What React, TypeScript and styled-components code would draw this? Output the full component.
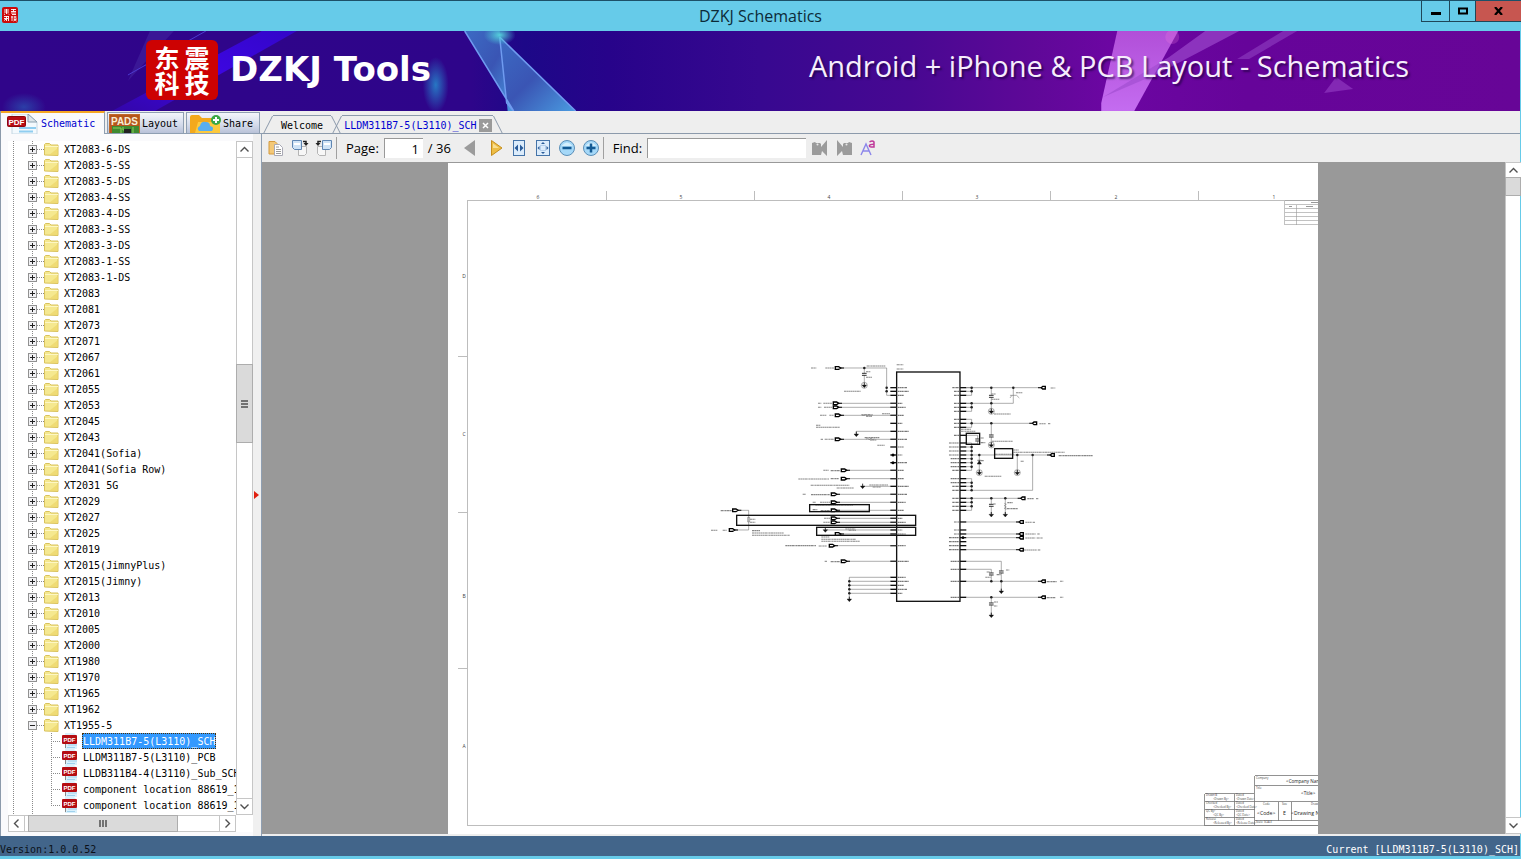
import React from 'react';
import styled, { createGlobalStyle } from 'styled-components';

const MONO = '"DejaVu Sans Mono", "Liberation Mono", monospace';
const UI = '"Open Sans", "Noto Sans", sans-serif';
const CJK = '"Noto Sans CJK SC", sans-serif';

const GlobalStyle = createGlobalStyle`
  *, *::before, *::after { box-sizing: border-box; }
  body { margin: 0; overflow: hidden; font-family: ${UI}; color: #000; }
  button, input { font: inherit; color: inherit; }
  svg { display: block; flex: none; }
`;

const Window = styled.div`
  display: flex;
  flex-direction: column;
  height: 100vh;
  border-right: 1px solid #66cbe9;
  border-bottom: 3px solid #66cbe9;
  background: #eeeeee;
`;

const TitleBar = styled.header`
  position: relative;
  display: flex;
  align-items: center;
  justify-content: center;
  flex: none;
  height: 31px;
  margin-right: -1px;
  border-top: 1px solid #1c5068;
  background: #66cbe9;
`;

const TitleText = styled.h1`
  margin: 0;
  font-size: 16px;
  font-weight: 400;
  line-height: 24px;
  color: #0c2a38;
`;

const AppBadge = styled.div`
  position: absolute;
  left: 2px;
  top: 6px;
`;

const WindowButtons = styled.div`
  position: absolute;
  right: 0;
  top: 0;
  display: flex;
`;

const WindowButton = styled.button<{ $wide?: number; $close?: boolean }>`
  display: flex;
  align-items: center;
  justify-content: center;
  width: ${(p) => p.$wide ?? 27}px;
  height: 21px;
  padding: 0;
  border: solid #1f4658;
  border-width: 0 0 1px 1px;
  background: ${(p) => (p.$close ? '#c75650' : 'transparent')};
`;

const Banner = styled.section`
  position: relative;
  display: flex;
  align-items: center;
  flex: none;
  height: 80px;
  overflow: hidden;
  background: #30058a;
`;

const BannerArt = styled.svg`
  position: absolute;
  inset: 0;
  width: 100%;
  height: 100%;
`;

const Seal = styled.div`
  position: relative;
  display: grid;
  grid-template-columns: 30px 30px;
  grid-auto-rows: 25px;
  justify-content: center;
  align-content: center;
  width: 72px;
  height: 60px;
  margin: 0 12px 2px 146px;
  border-radius: 6px;
  background: #cd0202;
  color: #fff;
  font-family: ${CJK};
  font-size: 25px;
  font-weight: 700;
  line-height: 24px;
  text-align: center;
`;

const Brand = styled.div`
  position: relative;
  padding-bottom: 4px;
  font-family: "DejaVu Sans", ${UI};
  font-size: 34px;
  font-weight: 700;
  line-height: 46px;
  color: #fff;
`;

const Slogan = styled.div`
  position: relative;
  margin-left: auto;
  margin-right: 111px;
  padding-bottom: 10px;
  font-size: 29px;
  font-weight: 400;
  line-height: 40px;
  color: #f6eefc;
  text-shadow: 2px 2px 2px rgba(20, 0, 50, 0.6);
  white-space: nowrap;
`;

const Body = styled.main`
  display: flex;
  flex: 1;
  min-height: 0;
`;

const Sidebar = styled.aside`
  display: flex;
  flex-direction: column;
  flex: none;
  width: 262px;
  border-left: 1px solid #8c9aab;
  background: #eeeeee;
`;

const SideTabs = styled.nav`
  display: flex;
  align-items: flex-end;
  gap: 2px;
  flex: none;
  height: 23px;
  border-bottom: 1px solid #8f9fb2;
`;

const SideTab = styled.button<{ $active?: boolean; $width: number }>`
  display: flex;
  align-items: center;
  gap: 2px;
  width: ${(p) => p.$width}px;
  height: ${(p) => (p.$active ? 23 : 21)}px;
  margin-bottom: ${(p) => (p.$active ? -1 : 0)}px;
  padding: 0 0 0 ${(p) => (p.$active ? 6 : 1)}px;
  border: 1px solid #8f9fb2;
  border-bottom: 0;
  border-left-width: ${(p) => (p.$active ? 0 : 1)}px;
  border-top: ${(p) => (p.$active ? '2px solid #f5a623' : '1px solid #8f9fb2')};
  background: ${(p) => (p.$active ? '#fafafc' : 'linear-gradient(#f4f6fb, #d3daea 60%, #b9c2d8)')};
  color: ${(p) => (p.$active ? '#0000d0' : '#000')};
  font-family: ${MONO};
  font-size: 10px;
  overflow: hidden;
`;

const SideMain = styled.div`
  display: flex;
  flex: 1;
  min-height: 0;
  background: #fafafc;
`;

const TreeFrame = styled.div`
  display: grid;
  grid-template-columns: 1fr 17px;
  grid-template-rows: 1fr 17px;
  flex: 1;
  min-width: 0;
  margin: 7px 0 4px 7px;
  background: #fff;
`;

const TreeView = styled.div`
  position: relative;
  min-width: 0;
  min-height: 0;
  overflow: hidden;
`;

const TreeList = styled.ul`
  margin: 0;
  padding: 0;
  list-style: none;
  background:
    repeating-linear-gradient(#8a8a8a 0 1px, transparent 1px 2px) 5px 0 / 1px 100% no-repeat,
    repeating-linear-gradient(#8a8a8a 0 1px, transparent 1px 2px) 24px 0 / 1px 100% no-repeat;
`;

const FileList = styled.ul`
  margin: 0 0 0 43px;
  padding: 0;
  list-style: none;
  background: repeating-linear-gradient(#8a8a8a 0 1px, transparent 1px 2px) 0 0 / 1px 72px no-repeat;
`;

const TreeRow = styled.li<{ $file?: boolean }>`
  display: flex;
  align-items: center;
  height: 16px;
  padding-left: ${(p) => (p.$file ? 0 : 20)}px;
  font-family: ${MONO};
  font-size: 10px;
  line-height: 14px;
  white-space: nowrap;
`;

const Expander = styled.button`
  position: relative;
  flex: none;
  width: 9px;
  height: 9px;
  padding: 0;
  border: 1px solid #919191;
  background: #f1f1f4;
`;

const ExpanderMark = styled.svg`
  width: 7px;
  height: 7px;
`;

const Lead = styled.span<{ $width: number }>`
  flex: none;
  width: ${(p) => p.$width}px;
  height: 1px;
  background: repeating-linear-gradient(90deg, #8a8a8a 0 1px, transparent 1px 2px);
`;

const NodeName = styled.span<{ $selected?: boolean }>`
  margin-left: 4px;
  padding: 2px 1px 0;
  ${(p) => p.$selected && 'background: #3399ff; color: #fff; outline: 1px dotted #503000; outline-offset: -1px;'}
`;

const ScrollBar = styled.div<{ $row?: boolean }>`
  display: flex;
  flex-direction: ${(p) => (p.$row ? 'row' : 'column')};
  min-width: 0;
  min-height: 0;
  border: 1px solid #c6c6c6;
  background: #fff;
`;

const ScrollArrow = styled.button`
  display: flex;
  align-items: center;
  justify-content: center;
  flex: none;
  width: 15px;
  height: 15px;
  padding: 0;
  border: 0;
  background: #fff;
  outline: 1px solid #c6c6c6;
`;

const Spacer = styled.div<{ $grow: number }>`
  flex: ${(p) => p.$grow} 1 0;
`;

const Thumb = styled.div<{ $grow: number }>`
  display: flex;
  align-items: center;
  justify-content: center;
  flex: ${(p) => p.$grow} 1 0;
  background: #dadada;
  outline: 1px solid #adadad;
`;

const Splitter = styled.div`
  display: flex;
  align-items: center;
  flex: none;
  width: 9px;
  padding: 20px 0 0 1px;
  border-right: 1px solid #8f9fb2;
  background: #f0f0f0;
`;

const Content = styled.section`
  display: flex;
  flex-direction: column;
  flex: 1;
  min-width: 0;
`;

const DocTabs = styled.nav`
  display: flex;
  flex: none;
  height: 23px;
  padding-left: 11px;
  border-bottom: 1px solid #8c9aab;
`;

const DocTab = styled.div<{ $active?: boolean }>`
  position: relative;
  display: flex;
  align-items: center;
  height: 19px;
  margin: 4px 0 0;
  padding: ${(p) => (p.$active ? '0 1px 0 2px' : '0 8px')};
  border-top: 1px solid #8c9aab;
  font-family: ${MONO};
  font-size: 10px;
  color: ${(p) => (p.$active ? '#0000d0' : '#000')};
  &::before, &::after {
    content: '';
    position: absolute;
    top: 0;
    width: 1px;
    height: 18px;
    background: #8c9aab;
  }
  &::before { left: -1px; transform-origin: top; transform: skewX(-27deg); }
  &::after { right: -1px; transform-origin: top; transform: skewX(27deg); }
  & + & { margin-left: 11px; }
`;

const TabLink = styled.button`
  padding: 0;
  border: 0;
  background: none;
`;

const TabClose = styled.button`
  display: flex;
  align-items: center;
  justify-content: center;
  width: 13px;
  height: 13px;
  margin-left: 2px;
  padding: 0;
  border: 0;
  background: #9a9a9a;
`;

const Toolbar = styled.div`
  display: flex;
  align-items: center;
  flex: none;
  height: 28px;
  padding-left: 2px;
  font-size: 13px;
  line-height: 20px;
  background: #eeeeee;
`;

const ToolButton = styled.button`
  display: flex;
  align-items: center;
  justify-content: center;
  flex: none;
  width: 24px;
  height: 24px;
  padding: 0;
  border: 0;
  background: none;
`;

const Divider = styled.span`
  flex: none;
  width: 1px;
  height: 22px;
  background: #a0a0a0;
`;

const FieldLabel = styled.label`
  margin: 0 5px 0 9px;
`;

const Field = styled.input<{ $width: number }>`
  width: ${(p) => p.$width}px;
  height: 20px;
  padding: 0 4px;
  border: solid #999;
  border-width: 1px 0 0 1px;
  border-radius: 0;
  background: #fff;
  text-align: ${(p) => (p.$width < 100 ? 'right' : 'left')};
`;

const PageTotal = styled.span`
  margin: 0 8px 0 5px;
`;

const FindActions = styled.div`
  display: flex;
  margin-left: 2px;
`;

const Viewer = styled.div`
  display: flex;
  flex: 1;
  min-height: 0;
  margin-bottom: 2px;
  background: #999999;
`;

const PageArea = styled.div`
  display: flex;
  justify-content: center;
  flex: 1;
  min-width: 0;
  min-height: 0;
  padding: 1px 1px 0 0;
  overflow: hidden;
`;

const Sheet = styled.svg`
  flex: none;
  width: 870px;
  height: 100%;
  background: #fff;
`;

const ViewerScroll = styled.div`
  display: flex;
  flex: none;
  width: 15px;
  & > div { flex: 1; border-right: 0; }
`;

const StatusBar = styled.footer`
  display: flex;
  justify-content: space-between;
  align-items: flex-end;
  flex: none;
  height: 20px;
  padding-right: 1px;
  background: #42658a;
  font-family: ${MONO};
  font-size: 10px;
  line-height: 12px;
  color: #0b1118;
`;

const Current = styled.span`
  color: #fff;
`;

/* ---------- small drawings ---------- */

const Chevron = ({ d }: { d: string }) => (
  <svg width="9" height="9" viewBox="0 0 9 9" fill="none" stroke="#505050" strokeWidth="1.4"><path d={d} /></svg>
);
const UP = 'M0.5 6.5 L4.5 2.5 L8.5 6.5';
const DOWN = 'M0.5 2.5 L4.5 6.5 L8.5 2.5';
const LEFT = 'M6.5 0.5 L2.5 4.5 L6.5 8.5';
const RIGHT = 'M2.5 0.5 L6.5 4.5 L2.5 8.5';

const Folder = () => (
  <svg width="15" height="13" viewBox="0 0 15 13">
    <path d="M0.5 12V1.5l1-1h4l1.5 1.5h7v10.5z" fill="#f5e88f" stroke="#d9c25c" />
    <path d="M1 3.5h13" stroke="#fdf7c4" />
    <path d="M5 12L14 5v7z" fill="#ecd569" opacity=".7" />
  </svg>
);

const PdfSmall = () => (
  <svg width="17" height="16" viewBox="0 0 17 16">
    <path d="M4 0h9l3 3v13H4z" fill="#d9f0fb" />
    <path d="M7 12h9M6 14.500h8" stroke="#9fd2ee" />
    <path d="M4.500 11v4" stroke="#888" />
    <rect x="1" y="2" width="15" height="9" rx="1" fill="#b50d12" />
    <text x="8.500" y="9" textAnchor="middle" fontFamily="Liberation Sans, sans-serif" fontSize="6" fontWeight="700" fill="#fff">PDF</text>
  </svg>
);

const PdfLarge = () => (
  <svg width="32" height="20" viewBox="0 0 32 20">
    <path d="M5 0h16l9 8v12H5z" fill="#f3f9fd" stroke="#c4d6e2" />
    <path d="M21 0v8h9z" fill="#dde5ea" stroke="#8ba0af" />
    <path d="M12 14h17M12 17.500h14" stroke="#8fcdf0" strokeWidth="2" />
    <rect x="0.500" y="2.500" width="18" height="10" rx="1" fill="#b80c14" stroke="#8d070b" />
    <text x="9.500" y="10.500" textAnchor="middle" fontFamily="Liberation Sans, sans-serif" fontSize="8" fontWeight="700" fill="#fff">PDF</text>
  </svg>
);

const PadsIcon = () => (
  <svg width="31" height="19" viewBox="0 0 31 19">
    <rect width="31" height="19" fill="#c06a2a" />
    <rect x="1" y="1" width="29" height="18" fill="#b5561c" />
    <rect x="3" y="12" width="27" height="7" fill="#3f8a30" />
    <path d="M4 14h8v5M24 13v6M14 13v3h8" stroke="#8ccf5a" fill="none" />
    <rect x="15" y="15" width="7" height="4" fill="#222" />
    <text x="15.500" y="11" textAnchor="middle" fontFamily="Liberation Sans, sans-serif" fontSize="10" fontWeight="700" fill="#f7edd4">PADS</text>
  </svg>
);

const ShareIcon = () => (
  <svg width="33" height="19" viewBox="-2 0 33 19">
    <path d="M0 19V3q0-2 2-2h7l3 3h12q2 0 2 2v13z" fill="#f3a91c" />
    <path d="M5 19L8 8h22v11z" fill="#fdc93c" />
    <path d="M9 17q-3-3 1-5 1-5 6-4 4 0 4 4 5 1 2 5z" fill="#58aef0" />
    <circle cx="26" cy="6" r="5" fill="#3ba745" />
    <path d="M26 3v6M23 6h6" stroke="#fff" strokeWidth="2" />
  </svg>
);

const BannerShapes = () => (
  <BannerArt viewBox="0 0 1521 80" preserveAspectRatio="none" aria-hidden="true">
    <defs>
      <linearGradient id="base">
        <stop offset="0" stopColor="#30058a" />
        <stop offset="0.310" stopColor="#2e058a" />
        <stop offset="0.345" stopColor="#1d0888" />
        <stop offset="0.400" stopColor="#27038a" />
        <stop offset="0.500" stopColor="#370890" />
        <stop offset="0.600" stopColor="#480892" />
        <stop offset="0.680" stopColor="#5f0898" />
        <stop offset="0.730" stopColor="#6c06a2" />
        <stop offset="0.820" stopColor="#66049a" />
        <stop offset="1" stopColor="#670597" />
      </linearGradient>
      <linearGradient id="shard" x1="0" y1="0" x2="1" y2="1">
        <stop offset="0" stopColor="#3c6bc4" />
        <stop offset="0.500" stopColor="#3a55b4" />
        <stop offset="1" stopColor="#4a9be0" />
      </linearGradient>
      <linearGradient id="pink" x1="0" y1="0" x2="0" y2="1">
        <stop offset="0" stopColor="#b14fd8" />
        <stop offset="1" stopColor="#c46cf0" />
      </linearGradient>
      <linearGradient id="streak" x1="1" y1="0" x2="0" y2="1">
        <stop offset="0" stopColor="#3306c8" />
        <stop offset="0.500" stopColor="#3d06e2" />
        <stop offset="1" stopColor="#3306a8" />
      </linearGradient>
      <radialGradient id="glow">
        <stop offset="0" stopColor="#2777c4" />
        <stop offset="1" stopColor="#2777c4" stopOpacity="0" />
      </radialGradient>
      <radialGradient id="teal">
        <stop offset="0" stopColor="#55d0dc" />
        <stop offset="1" stopColor="#49c4d8" stopOpacity="0" />
      </radialGradient>
    </defs>
    <rect width="1521" height="80" fill="url(#base)" />
    <path d="M262 0h35L155 80h-43z" fill="url(#streak)" />
    <path d="M150 0h24L128 50z" fill="#4a33a8" opacity=".4" />
    <path d="M206 0L128 44" stroke="#4d3bd0" />
    <ellipse cx="436" cy="54" rx="13" ry="28" fill="url(#glow)" />
    <ellipse cx="24" cy="76" rx="22" ry="14" fill="url(#glow)" opacity=".5" />
    <path d="M465 0H500L508 80H514z" fill="url(#shard)" />
    <path d="M500 6L576 80H514L507 72z" fill="url(#shard)" />
    <path d="M465 0L514 80M500 6L576 80M500 6L507 72L514 80" stroke="#6f9bf0" strokeWidth="1.500" fill="none" />
    <ellipse cx="500" cy="4" rx="16" ry="10" fill="url(#teal)" />
    <path d="M1118 0h61L1135 80h-33v-8z" fill="url(#pink)" />
    <path d="M1206 0h34L1160 42l-56 24 66-40z" fill="#a04dd0" opacity=".65" />
    <path d="M1284 0h14L1250 28h-12z" fill="#8a38bc" opacity=".7" />
    <path d="M1325 62l12-16 17 12z" fill="#8328b4" />
    <circle cx="1173" cy="6" r="7" fill="#f07adf" opacity=".25" />
  </BannerArt>
);

/* ---------- toolbar icons ---------- */

const Icon = ({ children }: { children: React.ReactNode }) => (
  <svg width="18" height="18" viewBox="0 0 18 18" fill="none">{children}</svg>
);

const CopyIcon = () => (
  <Icon>
    <path d="M2 2.500h6l2 2V15H2z" fill="#f3c877" stroke="#d49a3f" />
    <path d="M7.500 5.500h5l3 3v8h-8z" fill="#fff" stroke="#a9a9b5" />
    <path d="M9 8h3M9 10.500h5M9 12.500h5M9 14.500h5" stroke="#9a9a9a" />
  </Icon>
);

const RotateIcon = ({ flip }: { flip?: boolean }) => (
  <Icon>
    <g transform={flip ? 'translate(18 0) scale(-1 1)' : undefined}>
      <path d="M7.500 7.500h8v7l-2 2h-6z" fill="#f7f7f7" stroke="#b5b5b5" />
      <path d="M1.500 1.500h9v9h-7l-2-2z" fill="#cfe3f6" stroke="#5f86b3" />
      <path d="M3 5h6" stroke="#fff" strokeWidth="2" />
      <path d="M12 2.500h3V5" stroke="#222" strokeWidth="1.500" />
      <path d="M12.500 4h5L15 7z" fill="#222" />
    </g>
  </Icon>
);

const PrevIcon = () => <Icon><path d="M13 1v16L2 9z" fill="#9b9b9b" /></Icon>;
const NextIcon = () => (
  <Icon>
    <path d="M5.500 1.500v15L16 9z" fill="#edbd45" stroke="#c58e1e" />
    <path d="M7 4.500V9h6z" fill="#f9df92" />
  </Icon>
);
const FitWidthIcon = () => (
  <Icon>
    <rect x="3.500" y="1.500" width="11" height="15" fill="#dcecfb" stroke="#4473a8" />
    <path d="M8 5.500v7L4.500 9zM10 5.500v7L13.500 9z" fill="#2a5c9a" />
  </Icon>
);
const FitPageIcon = () => (
  <Icon>
    <rect x="2.500" y="1.500" width="13" height="15" fill="#dcecfb" stroke="#4473a8" />
    <path d="M9 3l2 2h-4zM9 15l2-2h-4zM3.500 9l2-2v4zM14.500 9l-2-2v4z" fill="#2a5c9a" />
    <path d="M6.500 6.500h5v5h-5z" stroke="#8fb2da" strokeDasharray="1 1" />
  </Icon>
);
const ZoomIcon = ({ plus }: { plus?: boolean }) => (
  <Icon>
    <circle cx="9" cy="9" r="7.500" fill="#a5d8f8" stroke="#5b8fb8" />
    <path d="M3.500 7Q9 0 14.500 7z" fill="#d4effd" />
    <path d={plus ? 'M4.500 9h9M9 4.500v9' : 'M4.500 9h9'} stroke="#135a94" strokeWidth="2.500" />
  </Icon>
);
const BinocularIcon = ({ flip }: { flip?: boolean }) => (
  <Icon>
    <g transform={flip ? 'translate(18 0) scale(-1 1)' : undefined}>
      <path d="M1 4l3-1 1 1h4l1 1v3l6-7v16l-5-5-1 4H1z" fill="#9b9b9b" />
      <circle cx="6.500" cy="5.500" r="1" fill="#e8e8e8" />
    </g>
  </Icon>
);
const MatchCaseIcon = () => (
  <Icon>
    <path d="M2 16L7 5l5 11M4 12h6" stroke="#8c86ea" strokeWidth="1.400" />
    <path d="M10.500 3q3-2 4.500 0v5q-5 .5-4.500-1.500Q11 5 15 5.200" stroke="#c03a9a" strokeWidth="1.500" />
  </Icon>
);

/* ---------- schematic sheet ---------- */

// Geometry below is kept on a grid of thirds of a screen pixel.
const leftPins = [113, 124, 136, 160, 172, 196, 220, 244, 268, 291, 315, 338, 361, 386, 409, 433, 457, 481, 505, 517, 540, 552, 587, 634, 682, 694, 706, 718, 730];
const rightPins = [113, 124, 136, 160, 172, 184, 208, 220, 232, 256, 279, 291, 303, 315, 326, 338, 350, 361, 386, 398, 409, 421, 445, 457, 469, 481, 516, 540, 552, 563, 575, 587, 599, 634, 658, 694, 742];

// [port x, y, wire end x]
const leftPorts = [
  [400, 160, 590], [400, 172, 590], [406, 196, 590], [406, 268, 590], [424, 361, 590], [424, 386, 590],
  [394, 433, 590], [394, 457, 590], [394, 481, 590], [394, 505, 590], [394, 517, 590], [406, 552, 590],
  [388, 587, 590], [424, 634, 590], [406, 54, 560], [98, 481, 146], [88, 540, 146],
];
const rightPorts = [
  [1036, 113], [1010, 220], [1063, 315], [975, 445], [970, 516], [970, 552], [970, 563], [970, 599], [1036, 694], [1036, 742],
];
// [x, y, length] of annotation runs too small to read
const notes = [
  [333, 54, 16], [376, 54, 26], [500, 48, 56], [498, 65, 14], [498, 82, 18], [432, 124, 50], [590, 44, 20], [590, 57, 20],
  [354, 160, 10], [370, 160, 28], [354, 172, 10], [372, 172, 24], [360, 196, 20], [388, 196, 14], [484, 194, 34], [498, 199, 18], [546, 191, 24],
  [348, 226, 14], [348, 232, 72], [362, 268, 8], [374, 268, 28], [494, 263, 44], [510, 270, 20], [532, 286, 22],
  [370, 361, 16], [392, 362, 28], [295, 387, 92], [392, 386, 24], [332, 406, 116], [410, 414, 52], [508, 405, 56], [518, 411, 24],
  [308, 433, 10], [333, 434, 56], [338, 457, 10], [360, 457, 30], [346, 465, 114], [338, 479, 14], [362, 482, 30], [372, 505, 20], [370, 517, 22],
  [62, 482, 34], [33, 541, 20], [68, 541, 12], [156, 542, 24], [156, 549, 96], [156, 556, 114], [364, 561, 24], [364, 568, 104], [364, 574, 116],
  [256, 587, 92], [356, 588, 24], [374, 634, 8], [392, 635, 28], [150, 508, 16], [150, 517, 16], [436, 537, 30], [446, 541, 22],
  [874, 132, 14], [874, 148, 24], [948, 128, 20], [882, 192, 50], [1052, 114, 14], [1018, 221, 20], [1044, 221, 8],
  [782, 238, 32], [782, 244, 44], [842, 278, 14], [876, 274, 62], [842, 264, 10], [884, 313, 58], [940, 300, 16], [940, 307, 154], [1076, 317, 102],
  [842, 332, 10], [854, 379, 50], [962, 334, 10], [982, 446, 20], [1008, 446, 8], [880, 462, 8], [922, 458, 16], [920, 476, 34],
  [976, 517, 20], [998, 517, 8], [976, 552, 32], [1012, 552, 8], [976, 564, 30], [1010, 564, 18], [972, 600, 40], [1014, 600, 8],
  [1040, 695, 30], [1080, 694, 10], [1040, 743, 26], [1080, 742, 10], [860, 666, 10], [856, 682, 16], [918, 660, 10], [882, 756, 12], [882, 768, 10], [890, 674, 12],
];
const dots = [
  [493, 54], [560, 113], [560, 124], [448, 694], [448, 706], [448, 718], [448, 730],
  [815, 113], [815, 124], [815, 160], [815, 172], [815, 220], [815, 291], [815, 303], [815, 315], [815, 326], [815, 338], [815, 350],
  [815, 398], [815, 409], [815, 421], [815, 445], [815, 457], [815, 469], [874, 113], [940, 113], [874, 160], [874, 220],
  [838, 315], [952, 315], [998, 315], [874, 445], [916, 445], [874, 694], [904, 694], [874, 742],
];
const grounds = [
  [493, 106, 1], [469, 253, 0], [488, 409, 0], [376, 540, 0], [448, 748, 0], [874, 184, 1], [874, 285, 1], [838, 368, 1], [952, 368, 1], [874, 494, 0], [916, 494, 0], [904, 724, 0], [874, 796, 0],
];
const caps = [[493, 73], [874, 139], [874, 258], [833, 270], [874, 466], [874, 672], [904, 666], [874, 762]];

const TINY = 'Open Sans, sans-serif';

const Circuit = () => (
  <g transform="translate(700 350) scale(0.3333)" fill="none" stroke="#666" strokeWidth="1.600">
    <rect x="590" y="66" width="190" height="688" stroke="#111" strokeWidth="4" />
    {leftPins.map((y) => (
      <g key={y}>
        <path d={`M571 ${y}H590`} stroke="#111" strokeWidth="4" />
        <path d={`M593 ${y}h${14 + (y % 5) * 5}`} stroke="#777" strokeWidth="3.500" strokeDasharray="6 1 3 1" />
      </g>
    ))}
    {rightPins.map((y) => (
      <g key={y}>
        <path d={`M780 ${y}H799`} stroke="#111" strokeWidth="4" />
        <path d={`M${762 - (y % 4) * 5} ${y}H777`} stroke="#777" strokeWidth="3.500" strokeDasharray="6 1 3 1" />
      </g>
    ))}
    {leftPorts.map(([x, y, end]) => (
      <g key={`${x}-${y}`}>
        <path d={`M${x} ${y}H${end}`} />
        <path d={`M${x + 8} ${y}h18`} stroke="#222" strokeWidth="3.500" />
        <path d={`M${x} ${y - 4}h10l6 4-6 4h-10z`} fill="#fff" stroke="#000" strokeWidth="4" />
      </g>
    ))}
    {rightPorts.map(([x, y]) => (
      <g key={`${x}-${y}`}>
        <path d={`M799 ${y}H${x}`} />
        <path d={`M${x - 22} ${y}h12`} stroke="#222" strokeWidth="3.500" />
        <path d={`M${x} ${y + 4}h-8l-4-4 4-4h8z`} fill="#fff" stroke="#000" strokeWidth="4" />
      </g>
    ))}
    <path d="M493 54V100M560 54V136H571M469 253V244H571M488 409H571M146 481V540M448 748V682H571M448 694H571M448 706H571M448 718H571M448 730H571M376 540H571" />
    <path d="M799 113h16v23h-16M799 124h16M799 160h16v24h-16M799 172h16M799 160H940V113M799 208h16v24h-16M815 279h-16M815 279V361H799M799 291h16M799 303h16M799 326h16M799 338h16M799 350h16M799 386h16v35h-16M799 398h16M799 409h16M815 421H998V315M799 445h16v36h-16M799 457h16M799 469h16" />
    <path d="M874 113V184M874 220V285M838 315V368M952 315V368M874 445V494M916 445V494M799 634H904V724M799 658H874V694M874 742V796M799 256H833V282H815" />
    <path d="M930 136h20l8 8M936 136l-6 8M486 196h8l3-3 5 6 5-6 5 6 5-3M498 268l5-4 5 6 5-6 5 6 5-4M143 502h6v14h-6zM913 460l6 3-6 4 6 4-6 4 6 3" />
    {caps.map(([x, y]) => (
      <g key={`${x}-${y}`}>
        <path d={`M${x} ${y - 3}v6`} stroke="#fff" strokeWidth="4" />
        <path d={`M${x - 7} ${y - 3}h14M${x - 7} ${y + 3}h14`} stroke="#222" strokeWidth="2.800" />
      </g>
    ))}
    <path d="M832 330l6 10 6-10zM832 341h12" transform="rotate(180 838 336)" fill="#111" stroke="#111" />
    {grounds.map(([x, y, ring]) => (
      <g key={`${x}-${y}`} stroke="#111">
        {ring === 1 && <circle cx={x} cy={y} r="9" stroke="#666" />}
        <path d={`M${x} ${y - 8}v8`} strokeWidth="2.500" />
        <path d={`M${x - 7} ${y - 1}h14l-7 8z`} fill="#111" strokeWidth="1" />
      </g>
    ))}
    {dots.map(([x, y]) => <circle key={`${x}-${y}`} cx={x} cy={y} r="3.800" fill="#222" stroke="none" />)}
    {[315, 338].map((y) => <circle key={y} cx="579" cy={y} r="4.500" fill="#000" stroke="none" />)}
    <circle cx="789" cy="563" r="4" fill="#000" stroke="none" />
    {notes.map(([x, y, w]) => (
      <path key={`${x}-${y}`} d={`M${x} ${y}h${w}`} stroke="#888" strokeWidth="3.200" strokeDasharray="7 1 4 1 5 1" />
    ))}
    <g stroke="#111" strokeWidth="4">
      <rect x="329" y="464" width="179" height="21" />
      <rect x="110" y="496" width="537" height="30" />
      <rect x="350" y="532" width="297" height="24" />
      <rect x="799" y="250" width="40" height="33" />
      <rect x="884" y="296" width="54" height="29" />
    </g>
  </g>
);

const frameNumbers: [number, string][] = [[538, '6'], [681, '5'], [829, '4'], [977, '3'], [1116, '2'], [1274, '1']];
const frameLetters: [number, string][] = [[278, 'D'], [436, 'C'], [598, 'B'], [748, 'A']];
const approvals = [['<Drawn By>', '<Drawn Date>'], ['<Checked By>', '<Checked Date>'], ['<QC By>', '<QC Date>'], ['<Released By>', '<Release Date>']];

const SchematicSheet = () => (
  <Sheet viewBox="448 163 870 671" preserveAspectRatio="xMinYMin meet" role="img" aria-label="Schematic page 1">
    <g fill="none" stroke="#bdbdbd" shapeRendering="crispEdges">
      <path d="M1318 200.500H467.500V825.500H1318" />
      <path d="M606.500 191v9M754.500 191v9M902.500 191v9M1050.500 191v9M1198.500 191v9M458 356.500h9M458 512.500h9M458 668.500h9" />
    </g>
    <g fontFamily={TINY} fontSize="5" fill="#444" textAnchor="middle">
      {frameNumbers.map(([x, t]) => <text key={t} x={x} y="199">{t}</text>)}
      {frameLetters.map(([y, t]) => <text key={t} x="464" y={y}>{t}</text>)}
    </g>
    <g fill="none" stroke="#999" shapeRendering="crispEdges">
      <path d="M1318 200.500H1284.500V224.500H1318M1284.500 204.500H1318M1284.500 208.500H1318M1284.500 212.500H1318M1284.500 216.500H1318M1284.500 220.500H1318M1296.500 204.500V224.500" strokeWidth=".6" />
      <path d="M1311 202.500h7M1289 206.500h3M1306 206.500h7" />
    </g>
    <Circuit />
    <g fill="none" stroke="#777" strokeWidth=".8" shapeRendering="crispEdges">
      <path d="M1318 775.500H1254.500V825.500H1318M1254.500 785.500H1318M1254.500 801.500H1318M1254.500 820.500H1318M1278.500 801.500v19M1291.500 801.500v19" />
      <path d="M1254 793.500H1204.500V825.500H1254M1204.500 801.500h50M1204.500 809.500h50M1204.500 817.500h50M1234.500 793.500v32" />
    </g>
    <g fontFamily={TINY} fill="#222">
      <g fontSize="4.600">
        <text x="1286" y="783">&lt;Company Name&gt;</text>
        <text x="1301" y="795">&lt;Title&gt;</text>
      </g>
      <g fontSize="5.200">
        <text x="1257" y="815">&lt;Code&gt;</text>
        <text x="1283" y="815">E</text>
        <text x="1291" y="815">&lt;Drawing Number&gt;</text>
      </g>
      <g fontSize="2.800" fill="#444">
        <text x="1256" y="779">Company</text><text x="1256" y="789">Title</text>
        <text x="1263" y="805">Code</text><text x="1282" y="805">Size</text><text x="1311" y="805">Drawing</text>
        <text x="1256" y="823">Scale</text><text x="1264" y="823">SCALE</text>
        {approvals.map(([who, when], i) => (
          <g key={who}>
            <text x="1206" y={796 + i * 8}>{who.slice(1, 8)}</text>
            <text x="1213" y={800 + i * 8}>{who}</text>
            <text x="1236" y={796 + i * 8}>Dated</text>
            <text x="1236" y={800 + i * 8}>{when}</text>
          </g>
        ))}
      </g>
    </g>
  </Sheet>
);

/* ---------- data ---------- */

const models = [
  'XT2083-6-DS', 'XT2083-5-SS', 'XT2083-5-DS', 'XT2083-4-SS', 'XT2083-4-DS', 'XT2083-3-SS', 'XT2083-3-DS', 'XT2083-1-SS', 'XT2083-1-DS',
  'XT2083', 'XT2081', 'XT2073', 'XT2071', 'XT2067', 'XT2061', 'XT2055', 'XT2053', 'XT2045', 'XT2043', 'XT2041(Sofia)', 'XT2041(Sofia Row)',
  'XT2031 5G', 'XT2029', 'XT2027', 'XT2025', 'XT2019', 'XT2015(JimnyPlus)', 'XT2015(Jimny)', 'XT2013', 'XT2010', 'XT2005', 'XT2000',
  'XT1980', 'XT1970', 'XT1965', 'XT1962',
];
const files = ['LLDM311B7-5(L3110)_SCH', 'LLDM311B7-5(L3110)_PCB', 'LLDB311B4-4(L3110)_Sub_SCH', 'component location 88619_1', 'component location 88619_1'];

const FolderRow = ({ name, open }: { name?: string; open?: boolean }) => (
  <TreeRow>
    <Expander aria-label={open ? 'Collapse' : 'Expand'}>
      <ExpanderMark viewBox="0 0 7 7"><path d={open ? 'M1 3.500h5' : 'M1 3.500h5M3.500 1v5'} stroke="#222" /></ExpanderMark>
    </Expander>
    <Lead $width={7} />
    <Folder />
    {name && <NodeName>{name}</NodeName>}
  </TreeRow>
);

export default function App() {
  return (
    <Window>
      <GlobalStyle />
      <TitleBar>
        <AppBadge>
          <svg width="16" height="16" viewBox="0 0 16 16">
            <rect width="16" height="16" rx="2" fill="#cc0a0a" />
            <path d="M2 3h5M4.500 2v5M2 5h5M3 7l-1 .5M6 6.500l1 1M9 2.500h5M9 4.500h5M11.500 2v3M9 6h5M10 7.500h4M2 9.500h5M4.500 9v5M2 11.500h4M2 13.500l3-2M6.500 9v5M9 10h2M10 9v5M11.500 10h3M13 9v2M11.500 12h3l-3 2M12 12l2.500 2" stroke="#fff" strokeWidth=".9" fill="none" />
          </svg>
        </AppBadge>
        <TitleText>DZKJ Schematics</TitleText>
        <WindowButtons>
          <WindowButton $wide={28} aria-label="Minimize"><svg width="10" height="10"><rect y="6" width="10" height="3" /></svg></WindowButton>
          <WindowButton $wide={26} aria-label="Maximize"><svg width="10" height="8"><path d="M1 1.500h8v5H1z" fill="none" stroke="#000" strokeWidth="2" /></svg></WindowButton>
          <WindowButton $wide={46} $close aria-label="Close"><svg width="9" height="8" viewBox="0 0 9 8"><path d="M1 0l7 8M8 0L1 8" stroke="#000" strokeWidth="2.200" /></svg></WindowButton>
        </WindowButtons>
      </TitleBar>

      <Banner>
        <BannerShapes />
        <Seal><span>东</span><span>震</span><span>科</span><span>技</span></Seal>
        <Brand>DZKJ Tools</Brand>
        <Slogan>Android + iPhone &amp; PCB Layout - Schematics</Slogan>
      </Banner>

      <Body>
        <Sidebar>
          <SideTabs>
            <SideTab $active $width={104}><PdfLarge />Schematic</SideTab>
            <SideTab $width={77}><PadsIcon />Layout</SideTab>
            <SideTab $width={74}><ShareIcon />Share</SideTab>
          </SideTabs>
          <SideMain>
            <TreeFrame>
              <TreeView>
                <TreeList>
                  {models.map((m) => <FolderRow key={m} name={m} />)}
                  <FolderRow name="XT1955-5" open />
                  <li>
                    <FileList>
                      {files.map((f, i) => (
                        <TreeRow key={i} $file>
                          <Lead $width={10} />
                          <PdfSmall />
                          <NodeName $selected={i === 0}>{f}</NodeName>
                        </TreeRow>
                      ))}
                    </FileList>
                  </li>
                  <FolderRow />
                </TreeList>
              </TreeView>
              <ScrollBar>
                <ScrollArrow aria-label="Scroll up"><Chevron d={UP} /></ScrollArrow>
                <Spacer $grow={208} />
                <Thumb $grow={77}><svg width="7" height="8"><path d="M0 1h7M0 4h7M0 7h7" stroke="#505050" strokeWidth="1.500" /></svg></Thumb>
                <Spacer $grow={356} />
                <ScrollArrow aria-label="Scroll down"><Chevron d={DOWN} /></ScrollArrow>
              </ScrollBar>
              <ScrollBar $row>
                <ScrollArrow aria-label="Scroll left"><Chevron d={LEFT} /></ScrollArrow>
                <Spacer $grow={5} />
                <Thumb $grow={147}><svg width="8" height="7"><path d="M1 0v7M4 0v7M7 0v7" stroke="#505050" strokeWidth="1.500" /></svg></Thumb>
                <Spacer $grow={43} />
                <ScrollArrow aria-label="Scroll right"><Chevron d={RIGHT} /></ScrollArrow>
              </ScrollBar>
            </TreeFrame>
            <Splitter><svg width="5" height="8"><path d="M0 0v8l5-4z" fill="#e02010" /></svg></Splitter>
          </SideMain>
        </Sidebar>

        <Content>
          <DocTabs>
            <DocTab><TabLink>Welcome</TabLink></DocTab>
            <DocTab $active>
              <TabLink>LLDM311B7-5(L3110)_SCH</TabLink>
              <TabClose aria-label="Close tab"><svg width="7" height="7"><path d="M1 1l5 5M6 1L1 6" stroke="#fff" strokeWidth="1.500" /></svg></TabClose>
            </DocTab>
          </DocTabs>
          <Toolbar>
            <ToolButton aria-label="Copy"><CopyIcon /></ToolButton>
            <ToolButton aria-label="Rotate right"><RotateIcon /></ToolButton>
            <ToolButton aria-label="Rotate left"><RotateIcon flip /></ToolButton>
            <Divider />
            <FieldLabel htmlFor="page">Page:</FieldLabel>
            <Field id="page" $width={39} defaultValue="1" />
            <PageTotal>/ 36</PageTotal>
            <ToolButton aria-label="Previous page"><PrevIcon /></ToolButton>
            <ToolButton aria-label="Next page"><NextIcon /></ToolButton>
            <ToolButton aria-label="Fit width"><FitWidthIcon /></ToolButton>
            <ToolButton aria-label="Fit page"><FitPageIcon /></ToolButton>
            <ToolButton aria-label="Zoom out"><ZoomIcon /></ToolButton>
            <ToolButton aria-label="Zoom in"><ZoomIcon plus /></ToolButton>
            <Divider />
            <FieldLabel htmlFor="find">Find:</FieldLabel>
            <Field id="find" $width={159} />
            <FindActions>
              <ToolButton aria-label="Find previous"><BinocularIcon /></ToolButton>
              <ToolButton aria-label="Find next"><BinocularIcon flip /></ToolButton>
              <ToolButton aria-label="Match case"><MatchCaseIcon /></ToolButton>
            </FindActions>
          </Toolbar>
          <Viewer>
            <PageArea><SchematicSheet /></PageArea>
            <ViewerScroll>
              <ScrollBar>
                <ScrollArrow aria-label="Page up"><Chevron d={UP} /></ScrollArrow>
                <Thumb $grow={17} />
                <Spacer $grow={625} />
                <ScrollArrow aria-label="Page down"><Chevron d={DOWN} /></ScrollArrow>
              </ScrollBar>
            </ViewerScroll>
          </Viewer>
        </Content>
      </Body>

      <StatusBar>
        <span>Version:1.0.0.52</span>
        <Current>Current [LLDM311B7-5(L3110)_SCH]</Current>
      </StatusBar>
    </Window>
  );
}
